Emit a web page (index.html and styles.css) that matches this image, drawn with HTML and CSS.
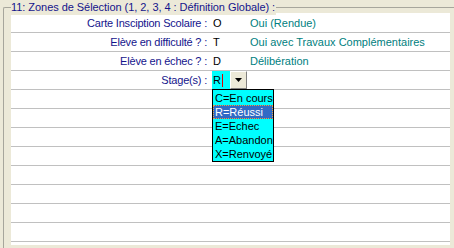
FILE: index.html
```html
<!DOCTYPE html>
<html>
<head>
<meta charset="utf-8">
<link rel="stylesheet" href="styles.css">
</head>
<body>
<div class="group">
  <div class="legend">11: Zones de Sélection (1, 2, 3, 4 : Définition Globale) :</div>
  <div class="panel">
    <div class="row"><span class="label">Carte Insciption Scolaire :</span><span class="code">O</span><span class="desc">Oui (Rendue)</span></div>
    <div class="row"><span class="label">Elève en difficulté ? :</span><span class="code">T</span><span class="desc">Oui avec Travaux Complémentaires</span></div>
    <div class="row"><span class="label">Elève en échec ? :</span><span class="code">D</span><span class="desc">Délibération</span></div>
    <div class="row"><span class="label">Stage(s) :</span>
      <span class="combo">
        <span class="input">R<span class="caret"></span></span>
        <span class="btn"><svg width="7" height="4" viewBox="0 0 7 4"><path d="M0 0H7L3.5 4Z" fill="#000"/></svg></span>
        <span class="list">
          <span class="item">C=En cours</span>
          <span class="item sel">R=Réussi</span>
          <span class="item">E=Echec</span>
          <span class="item">A=Abandon</span>
          <span class="item">X=Renvoyé</span>
        </span>
      </span>
    </div>
    <div class="row"></div>
    <div class="row"></div>
    <div class="row"></div>
    <div class="row"></div>
    <div class="row"></div>
    <div class="row"></div>
    <div class="row"></div>
    <div class="row"></div>
  </div>
</div>
</body>
</html>
```
FILE: styles.css
```css
html, body {
  margin: 0;
  padding: 0;
  height: 248px;
  overflow: hidden;
  background: #ECE9D8;
  font-family: "Liberation Sans", Arial, sans-serif;
  font-size: 11px;
}
.group {
  margin: 7px 0 0 3px;
  border-top: 1px solid #A7A69C;
  border-left: 1px solid #A7A69C;
  border-top-left-radius: 2px;
  height: 240px;
}
.legend {
  display: inline-block;
  margin: -8px 0 0 7px;
  padding: 0 1px 0 0;
  background: #ECE9D8;
  color: #14148C;
  line-height: 15px;
  height: 15px;
  vertical-align: top;
  letter-spacing: -0.05px;
}
.panel {
  margin: -7px 0 0 7px;
  width: 439px;
  height: 232px;
  background: #fff;
  padding-top: 1px;
  box-sizing: border-box;
}
.row {
  height: 19px;
  border-bottom: 1px solid #C0C0C0;
  box-sizing: border-box;
  display: flex;
  align-items: center;
}
.label {
  width: 196px;
  text-align: right;
  color: #14148C;
  letter-spacing: -0.2px;
}
.code {
  margin-left: 6px;
  width: 37px;
  color: #000;
}
.desc {
  color: #008080;
}
.combo {
  margin-left: 5px;
  display: flex;
  align-self: stretch;
  position: relative;
}
.input {
  width: 18px;
  background: #00FFFF;
  color: #000;
  display: flex;
  align-items: center;
  padding-left: 1px;
  box-sizing: border-box;
}
.caret {
  display: inline-block;
  width: 1px;
  height: 13px;
  background: #E00000;
  margin-left: 1px;
}
.btn {
  width: 17px;
  box-sizing: border-box;
  background: #ECE9D8;
  border: 1px solid;
  border-color: #fff #808080 #808080 #fff;
  display: flex;
  align-items: center;
  justify-content: center;
}
.list {
  position: absolute;
  left: 0;
  top: 18px;
  width: 62px;
  box-sizing: border-box;
  border: 1px solid #000;
  background: #00FFFF;
  padding: 1px 0 0 0;
  display: flex;
  flex-direction: column;
  z-index: 2;
}
.item {
  height: 14px;
  line-height: 12px;
  padding: 0 0 0 1px;
  border: 1px solid transparent;
  box-sizing: border-box;
  color: #000;
  white-space: nowrap;
}
.item.sel {
  background: #316AC5;
  color: #fff;
  border: 1px dotted #E8A040;
}
```
